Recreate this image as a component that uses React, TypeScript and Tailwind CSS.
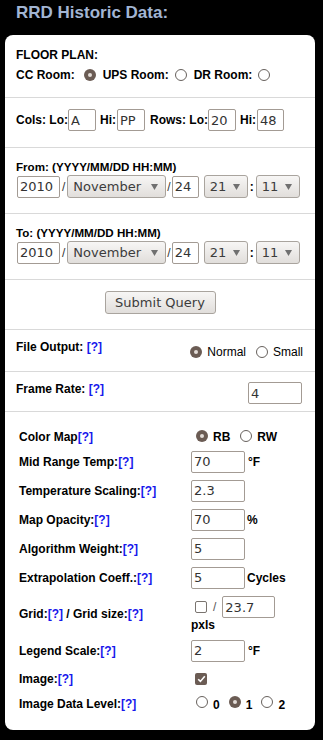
import React from "react";

const Help = () => <span className="text-[#1717ec] font-bold">[?]</span>;

const Radio = ({ checked = false, className = "" }: { checked?: boolean; className?: string }) =>
  checked ? (
    <span className={`inline-flex w-[12px] h-[12px] shrink-0 rounded-full bg-[#6b5c54] items-center justify-center ${className}`}>
      <span className="w-[4px] h-[4px] rounded-full bg-[#e4ddd8]" />
    </span>
  ) : (
    <span className={`inline-block w-[12px] h-[12px] shrink-0 rounded-full border border-[#67615d] bg-white ${className}`} />
  );

const Check = ({ checked = false, className = "" }: { checked?: boolean; className?: string }) =>
  checked ? (
    <span className={`inline-flex w-[12px] h-[12px] shrink-0 rounded-[2px] bg-[#6b5c54] items-center justify-center ${className}`}>
      <svg width="9" height="8" viewBox="0 0 9 8">
        <path d="M1.2 4.2 L3.4 6.4 L7.8 1.2" stroke="#fff" strokeWidth="1.6" fill="none" />
      </svg>
    </span>
  ) : (
    <span className={`inline-block w-[12px] h-[12px] shrink-0 rounded-[2px] border border-[#7a746f] bg-white ${className}`} />
  );

const Field = ({ value, w, className = "" }: { value: string; w: string; className?: string }) => (
  <input
    readOnly
    value={value}
    className={`${w} h-[22px] shrink-0 border border-[#a39b94] rounded-[2px] bg-white px-[2px] font-['DejaVu_Sans',sans-serif] text-[13px] font-normal text-[#333] outline-none ${className}`}
  />
);

const Drop = ({ value, w, className = "" }: { value: string; w: string; className?: string }) => (
  <div
    className={`${w} h-[23px] shrink-0 flex items-center justify-between rounded-[3px] border border-[#a9a49e] bg-linear-to-b from-[#f7f6f5] to-[#e1dedb] pl-[5px] pr-[7px] font-['DejaVu_Sans',sans-serif] text-[13px] font-normal text-[#3c3c3c] ${className}`}
  >
    <span>{value}</span>
    <svg width="7" height="6" viewBox="0 0 7 6">
      <path d="M0 0 H7 L3.5 6 Z" fill="#707070" />
    </svg>
  </div>
);

const DateRow = ({ title }: { title: string }) => (
  <div className="h-[66px] border-b border-[#d9d9d9] px-[11px] pt-[12px] font-bold">
    <div className="leading-[14px] text-[11.6px]">{title} (YYYY/MM/DD HH:MM)</div>
    <div className="mt-[1px] flex items-center h-[23px]">
      <Field value="2010" w="w-[43px]" className="ml-[1px]" />
      <span className="mx-[2px] font-normal text-[#333]">/</span>
      <Drop value="November" w="w-[99px]" />
      <span className="mx-[1px] font-normal text-[#333]">/</span>
      <Field value="24" w="w-[27px]" />
      <Drop value="21" w="w-[44px]" className="ml-[5px]" />
      <span className="mx-[2px]">:</span>
      <Drop value="11" w="w-[44px]" />
    </div>
  </div>
);

const Row = ({ h, label, children }: { h: string; label: React.ReactNode; children: React.ReactNode }) => (
  <div className={`flex items-center ${h}`}>
    <div className="w-[172px] font-bold">{label}</div>
    <div className="flex items-center font-bold">{children}</div>
  </div>
);

export default function App() {
  return (
    <div className="min-h-screen w-full bg-black font-['Liberation_Sans',Arial,sans-serif] text-[12px] text-black">
      <div className="h-[35px] pl-[16px] pt-[3px] text-[17px] leading-[20px] font-bold text-[#a2b5d3]">
        RRD Historic Data:
      </div>

      <div className="ml-[5px] w-[310px] rounded-[8px] bg-white">
        {/* floor plan */}
        <div className="h-[63px] border-b border-[#d9d9d9] px-[11px] pt-[13px] font-bold">
          <div className="leading-[14px]">FLOOR PLAN:</div>
          <div className="mt-[6px] flex items-center h-[14px]">
            <span>CC Room:</span>
            <Radio checked className="ml-[9px] mb-[1px]" />
            <span className="ml-[7px]">UPS Room:</span>
            <Radio className="ml-[6px] mb-[1px]" />
            <span className="ml-[7px]">DR Room:</span>
            <Radio className="ml-[6px] mb-[1px]" />
          </div>
        </div>

        {/* cols / rows */}
        <div className="h-[50px] border-b border-[#d9d9d9] px-[11px] pt-[11px] font-bold">
          <div className="flex items-center h-[22px]">
            <span>Cols: Lo:</span>
            <Field value="A" w="w-[28px]" />
            <span className="ml-[4px]">Hi:</span>
            <Field value="PP" w="w-[28px]" className="ml-[1px]" />
            <span className="ml-[5px]">Rows: Lo:</span>
            <Field value="20" w="w-[28px]" />
            <span className="ml-[4px]">Hi:</span>
            <Field value="48" w="w-[27px]" className="ml-[1px]" />
          </div>
        </div>

        <DateRow title="From:" />
        <DateRow title="To:" />

        {/* submit */}
        <div className="h-[50px] border-b border-[#d9d9d9] pt-[11px] flex justify-center">
          <button className="w-[111px] h-[23px] rounded-[3px] border border-[#a9a49e] bg-linear-to-b from-[#f7f6f5] to-[#e1dedb] font-['DejaVu_Sans',sans-serif] text-[13px] text-[#3c3c3c]">
            Submit Query
          </button>
        </div>

        {/* file output */}
        <div className="h-[42px] border-b border-[#d9d9d9] pl-[11px] pr-[12px] pt-[10px] flex justify-between">
          <div className="font-bold leading-[14px]">
            File Output: <Help />
          </div>
          <div className="mt-[5px] h-[14px] flex items-center">
            <Radio checked />
            <span className="ml-[5px]">Normal</span>
            <Radio className="ml-[10px]" />
            <span className="ml-[5px]">Small</span>
          </div>
        </div>

        {/* frame rate */}
        <div className="h-[40px] border-b border-[#d9d9d9] pl-[11px] pr-[13px] pt-[10px] flex justify-between items-start">
          <div className="font-bold leading-[14px]">
            Frame Rate: <Help />
          </div>
          <Field value="4" w="w-[54px]" />
        </div>

        {/* map settings */}
        <div className="pl-[14px] pt-[14px] pb-[15px]">
          <Row h="h-[21px]" label={<>Color Map<Help /></>}>
            <Radio checked className="ml-[5px] mb-[2px]" />
            <span className="ml-[5px]">RB</span>
            <Radio className="ml-[10px] mb-[2px]" />
            <span className="ml-[5px]">RW</span>
          </Row>
          <Row h="h-[29px]" label={<>Mid Range Temp:<Help /></>}>
            <Field value="70" w="w-[54px]" />
            <span className="ml-[3px]">°F</span>
          </Row>
          <Row h="h-[29px]" label={<>Temperature Scaling:<Help /></>}>
            <Field value="2.3" w="w-[54px]" />
          </Row>
          <Row h="h-[29px]" label={<>Map Opacity:<Help /></>}>
            <Field value="70" w="w-[54px]" />
            <span className="ml-[2px]">%</span>
          </Row>
          <Row h="h-[29px]" label={<>Algorithm Weight:<Help /></>}>
            <Field value="5" w="w-[54px]" />
          </Row>
          <Row h="h-[29px]" label={<>Extrapolation Coeff.:<Help /></>}>
            <Field value="5" w="w-[54px]" />
            <span className="ml-[2px]">Cycles</span>
          </Row>
          <div className="flex items-center h-[44px]">
            <div className="w-[172px] font-bold">
              Grid:<Help /> / Grid size:<Help />
            </div>
            <div className="flex flex-col">
              <div className="flex items-center h-[22px]">
                <Check className="ml-[4px]" />
                <span className="ml-[6px] font-normal text-[#555]">/</span>
                <Field value="23.7" w="w-[53px]" className="ml-[6px]" />
              </div>
              <div className="h-[14px] leading-[14px] font-bold">pxls</div>
            </div>
          </div>
          <Row h="h-[29px]" label={<>Legend Scale:<Help /></>}>
            <Field value="2" w="w-[54px]" />
            <span className="ml-[3px]">°F</span>
          </Row>
          <Row h="h-[27px]" label={<>Image:<Help /></>}>
            <Check checked className="ml-[4px]" />
          </Row>
          <Row h="h-[23px]" label={<>Image Data Level:<Help /></>}>
            <Radio className="ml-[5px] mb-[3px]" />
            <span className="ml-[5px] mt-[3px]">0</span>
            <Radio checked className="ml-[9px] mb-[3px]" />
            <span className="ml-[5px] mt-[3px]">1</span>
            <Radio className="ml-[9px] mb-[3px]" />
            <span className="ml-[5px] mt-[3px]">2</span>
          </Row>
        </div>
      </div>
    </div>
  );
}
